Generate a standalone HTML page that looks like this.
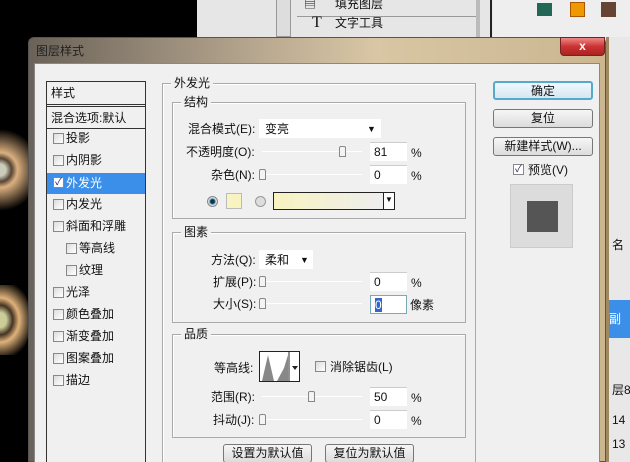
<!DOCTYPE html><html><head><meta charset="utf-8"><style>
*{margin:0;padding:0;box-sizing:border-box}
html,body{width:630px;height:462px;overflow:hidden}
body{background:#000;position:relative;font-family:"Liberation Sans","Noto Sans CJK SC",sans-serif;font-size:12px;color:#111}
.a{position:absolute}
.t{position:absolute;white-space:nowrap;line-height:14px}
.cb{position:absolute;width:11px;height:11px;border:1px solid #888;background:linear-gradient(135deg,#ddd,#fff)}
.grp{position:absolute;border:1px solid #aaa;box-shadow:1px 1px 0 #fff inset}
.leg{position:absolute;background:#f0f0f0;padding:0 3px;top:-8px;left:8px;line-height:14px}
.inp{position:absolute;width:37px;height:19px;background:#fff;border-top:1px solid #ccc;padding-left:4px;line-height:19px}
.sl{position:absolute;height:1px;background:#999;border-bottom:1px solid #fff}
.th{position:absolute;width:7px;height:11px;border:1px solid #888;border-radius:2px 2px 0 0;background:#f4f4f4}
.btn{position:absolute;height:19px;border:1px solid #777;border-radius:3px;background:linear-gradient(#f6f6f6,#dcdcdc);text-align:center;line-height:17px}
</style></head><body>
<div class="a" style="left:197px;top:0;width:433px;height:37px;background:#e6e6e6"></div>
<div class="a" style="left:276px;top:0;width:15px;height:37px;border:1px solid #999;border-top:none;background:#ddd"></div>
<div class="a" style="left:297px;top:16px;width:180px;height:1px;background:#999"></div>
<div class="t" style="left:304px;top:-3px">▤</div><div class="t" style="left:335px;top:-3px">填充图层</div>
<div class="t" style="left:312px;top:16px;font-family:'Liberation Serif',serif;font-size:16px">T</div><div class="t" style="left:335px;top:16px">文字工具</div>
<div class="a" style="left:476px;top:0;width:4px;height:37px;background:#bbb"></div>
<div class="a" style="left:490px;top:0;width:2px;height:462px;background:#222"></div>
<div class="a" style="left:493px;top:0;width:137px;height:462px;background:#eee"></div>
<div class="a" style="left:537px;top:3px;width:15px;height:13px;background:#265"></div>
<div class="a" style="left:570px;top:2px;width:15px;height:15px;background:#e90;border:1px solid #a50"></div>
<div class="a" style="left:601px;top:2px;width:15px;height:15px;background:#643"></div>
<div class="a" style="left:0;top:120px;width:30px;height:100px;border-radius:0 50% 50% 0;background:radial-gradient(circle at 0 50%,#ccb 10%,#543 20%,#dcb080 30%,#000 70%)"></div>
<div class="a" style="left:0;top:285px;width:30px;height:70px;border-radius:0 50% 50% 0;background:radial-gradient(ellipse at 0 50%,#cc9 15%,#432 30%,#e0b27a 45%,#000 80%)"></div>
<div class="a" style="left:28px;top:37px;width:578px;height:425px;border-radius:6px 6px 0 0;background:linear-gradient(90deg,#6a6258,#b8a890 40%,#d8c6a4 60%,#cbb690);border:1px solid #555"></div>
<div class="t" style="left:36px;top:44px;color:#222">图层样式</div>
<div class="a" style="left:560px;top:37px;width:45px;height:19px;border-radius:0 0 4px 4px;background:linear-gradient(#e88,#c33 50%,#a22);border:1px solid #722;color:#fff;text-align:center;font-weight:bold;line-height:16px">x</div>
<div class="a" style="left:34px;top:63px;width:566px;height:399px;background:#f0f0f0;border:1px solid #888;border-bottom:none"></div>
<div class="a" style="left:46px;top:81px;width:100px;height:381px;border:1px solid #333;border-bottom:none;background:#f0f0f0"></div>
<div class="t" style="left:51px;top:86px">样式</div>
<div class="a" style="left:47px;top:104px;width:98px;height:3px;border-top:1px solid #333;border-bottom:1px solid #333"></div>
<div class="t" style="left:51px;top:111px">混合选项:默认</div>
<div class="a" style="left:47px;top:128px;width:98px;height:1px;background:#333"></div>
<div class="a" style="left:47px;top:173px;width:98px;height:21px;background:#3b8fe8"></div>
<div class="cb" style="left:53px;top:133px"></div><div class="t" style="left:66px;top:131px">投影</div>
<div class="cb" style="left:53px;top:155px"></div><div class="t" style="left:66px;top:153px">内阴影</div>
<div class="cb" style="left:53px;top:177px;background:#fff;color:#226;font-size:10px;line-height:9px;text-align:center">✓</div><div class="t" style="left:66px;top:176px;color:#fff">外发光</div>
<div class="cb" style="left:53px;top:199px"></div><div class="t" style="left:66px;top:197px">内发光</div>
<div class="cb" style="left:53px;top:221px"></div><div class="t" style="left:66px;top:219px">斜面和浮雕</div>
<div class="cb" style="left:66px;top:243px"></div><div class="t" style="left:79px;top:241px">等高线</div>
<div class="cb" style="left:66px;top:265px"></div><div class="t" style="left:79px;top:263px">纹理</div>
<div class="cb" style="left:53px;top:287px"></div><div class="t" style="left:66px;top:285px">光泽</div>
<div class="cb" style="left:53px;top:309px"></div><div class="t" style="left:66px;top:307px">颜色叠加</div>
<div class="cb" style="left:53px;top:331px"></div><div class="t" style="left:66px;top:329px">渐变叠加</div>
<div class="cb" style="left:53px;top:353px"></div><div class="t" style="left:66px;top:351px">图案叠加</div>
<div class="cb" style="left:53px;top:375px"></div><div class="t" style="left:66px;top:373px">描边</div>
<div class="grp" style="left:162px;top:83px;width:314px;height:390px"><span class="leg">外发光</span></div>
<div class="grp" style="left:172px;top:102px;width:294px;height:117px"><span class="leg">结构</span></div>
<div class="grp" style="left:172px;top:232px;width:294px;height:91px"><span class="leg">图素</span></div>
<div class="grp" style="left:172px;top:334px;width:294px;height:104px"><span class="leg">品质</span></div>
<div class="t" style="left:188px;top:122px">混合模式(E):</div>
<div class="a" style="left:259px;top:119px;width:122px;height:19px;background:#fff"></div><div class="t" style="left:265px;top:122px">变亮</div><div class="t" style="left:367px;top:122px;font-size:9px">▼</div>
<div class="t" style="left:186px;top:145px">不透明度(O):</div>
<div class="sl" style="left:262px;top:151px;width:100px"></div><div class="th" style="left:339px;top:146px"></div>
<div class="inp" style="left:370px;top:142px">81</div><div class="t" style="left:411px;top:146px">%</div>
<div class="t" style="left:211px;top:168px">杂色(N):</div>
<div class="sl" style="left:262px;top:174px;width:100px"></div><div class="th" style="left:259px;top:169px"></div>
<div class="inp" style="left:370px;top:165px">0</div><div class="t" style="left:411px;top:169px">%</div>
<div class="a" style="left:207px;top:196px;width:11px;height:11px;border-radius:50%;background:radial-gradient(#134 30%,#6ad 45%,#ddd 60%);border:1px solid #888"></div>
<div class="a" style="left:226px;top:193px;width:16px;height:16px;background:#f8f3c0;border:1px solid #bbb"></div>
<div class="a" style="left:255px;top:196px;width:11px;height:11px;border-radius:50%;background:#ddd;border:1px solid #999"></div>
<div class="a" style="left:273px;top:192px;width:122px;height:18px;border:1px solid #222;background:linear-gradient(90deg,#f8f3c0,#eee 90%)"></div>
<div class="a" style="left:383px;top:192px;width:12px;height:18px;border:1px solid #222;background:#fff;font-size:8px;text-align:center;line-height:14px">▼</div>
<div class="t" style="left:211px;top:253px">方法(Q):</div>
<div class="a" style="left:259px;top:250px;width:54px;height:19px;background:#fff"></div><div class="t" style="left:265px;top:253px">柔和</div><div class="t" style="left:300px;top:253px;font-size:9px">▼</div>
<div class="t" style="left:213px;top:275px">扩展(P):</div>
<div class="sl" style="left:262px;top:281px;width:100px"></div><div class="th" style="left:259px;top:276px"></div>
<div class="inp" style="left:370px;top:272px">0</div><div class="t" style="left:411px;top:276px">%</div>
<div class="t" style="left:213px;top:297px">大小(S):</div>
<div class="sl" style="left:262px;top:303px;width:100px"></div><div class="th" style="left:259px;top:298px"></div>
<div class="inp" style="left:370px;top:295px;border:1px solid #7ab"><span style="background:#36c;color:#fff">0</span></div><div class="t" style="left:410px;top:298px">像素</div>
<div class="t" style="left:214px;top:361px">等高线:</div>
<div class="a" style="left:259px;top:351px;width:41px;height:31px;border:1px solid #222;background:#fff;overflow:hidden">
<svg width="41" height="31" style="position:absolute;left:0;top:0"><path d="M2 29 L8 3 L14 29 Z M17 29 L24 16 L28 3 L28 29 Z" fill="#888"/><line x1="29" y1="0" x2="29" y2="31" stroke="#222"/><path d="M32 14 L38 14 L35 18 Z" fill="#222"/></svg></div>
<div class="cb" style="left:315px;top:361px"></div><div class="t" style="left:330px;top:360px">消除锯齿(L)</div>
<div class="t" style="left:211px;top:390px">范围(R):</div>
<div class="sl" style="left:262px;top:396px;width:100px"></div><div class="th" style="left:308px;top:391px"></div>
<div class="inp" style="left:370px;top:387px">50</div><div class="t" style="left:411px;top:391px">%</div>
<div class="t" style="left:213px;top:413px">抖动(J):</div>
<div class="sl" style="left:262px;top:419px;width:100px"></div><div class="th" style="left:259px;top:414px"></div>
<div class="inp" style="left:370px;top:410px">0</div><div class="t" style="left:411px;top:414px">%</div>
<div class="btn" style="left:223px;top:444px;width:89px">设置为默认值</div>
<div class="btn" style="left:325px;top:444px;width:89px">复位为默认值</div>
<div class="btn" style="left:493px;top:81px;width:100px;border:2px solid #5ac;background:linear-gradient(#f0f8ff,#d6e6f0)">确定</div>
<div class="btn" style="left:493px;top:109px;width:100px">复位</div>
<div class="btn" style="left:493px;top:137px;width:100px">新建样式(W)...</div>
<div class="cb" style="left:513px;top:164px;background:#fff;color:#226;font-size:10px;line-height:9px;text-align:center">✓</div><div class="t" style="left:528px;top:163px">预览(V)</div>
<div class="a" style="left:510px;top:184px;width:63px;height:64px;background:#dcdcdc;border:1px solid #ccc"></div>
<div class="a" style="left:527px;top:201px;width:31px;height:31px;background:#555"></div>
<div class="a" style="left:606px;top:37px;width:24px;height:425px;background:#e8e8e8;border-left:3px solid #a08860"></div>
<div class="a" style="left:609px;top:300px;width:21px;height:38px;background:#3b8fe8;color:#fff;line-height:38px">副</div>
<div class="t" style="left:612px;top:238px">名</div>
<div class="t" style="left:612px;top:383px">层8</div>
<div class="t" style="left:612px;top:413px">14</div>
<div class="t" style="left:612px;top:437px">13</div>
</body></html>
